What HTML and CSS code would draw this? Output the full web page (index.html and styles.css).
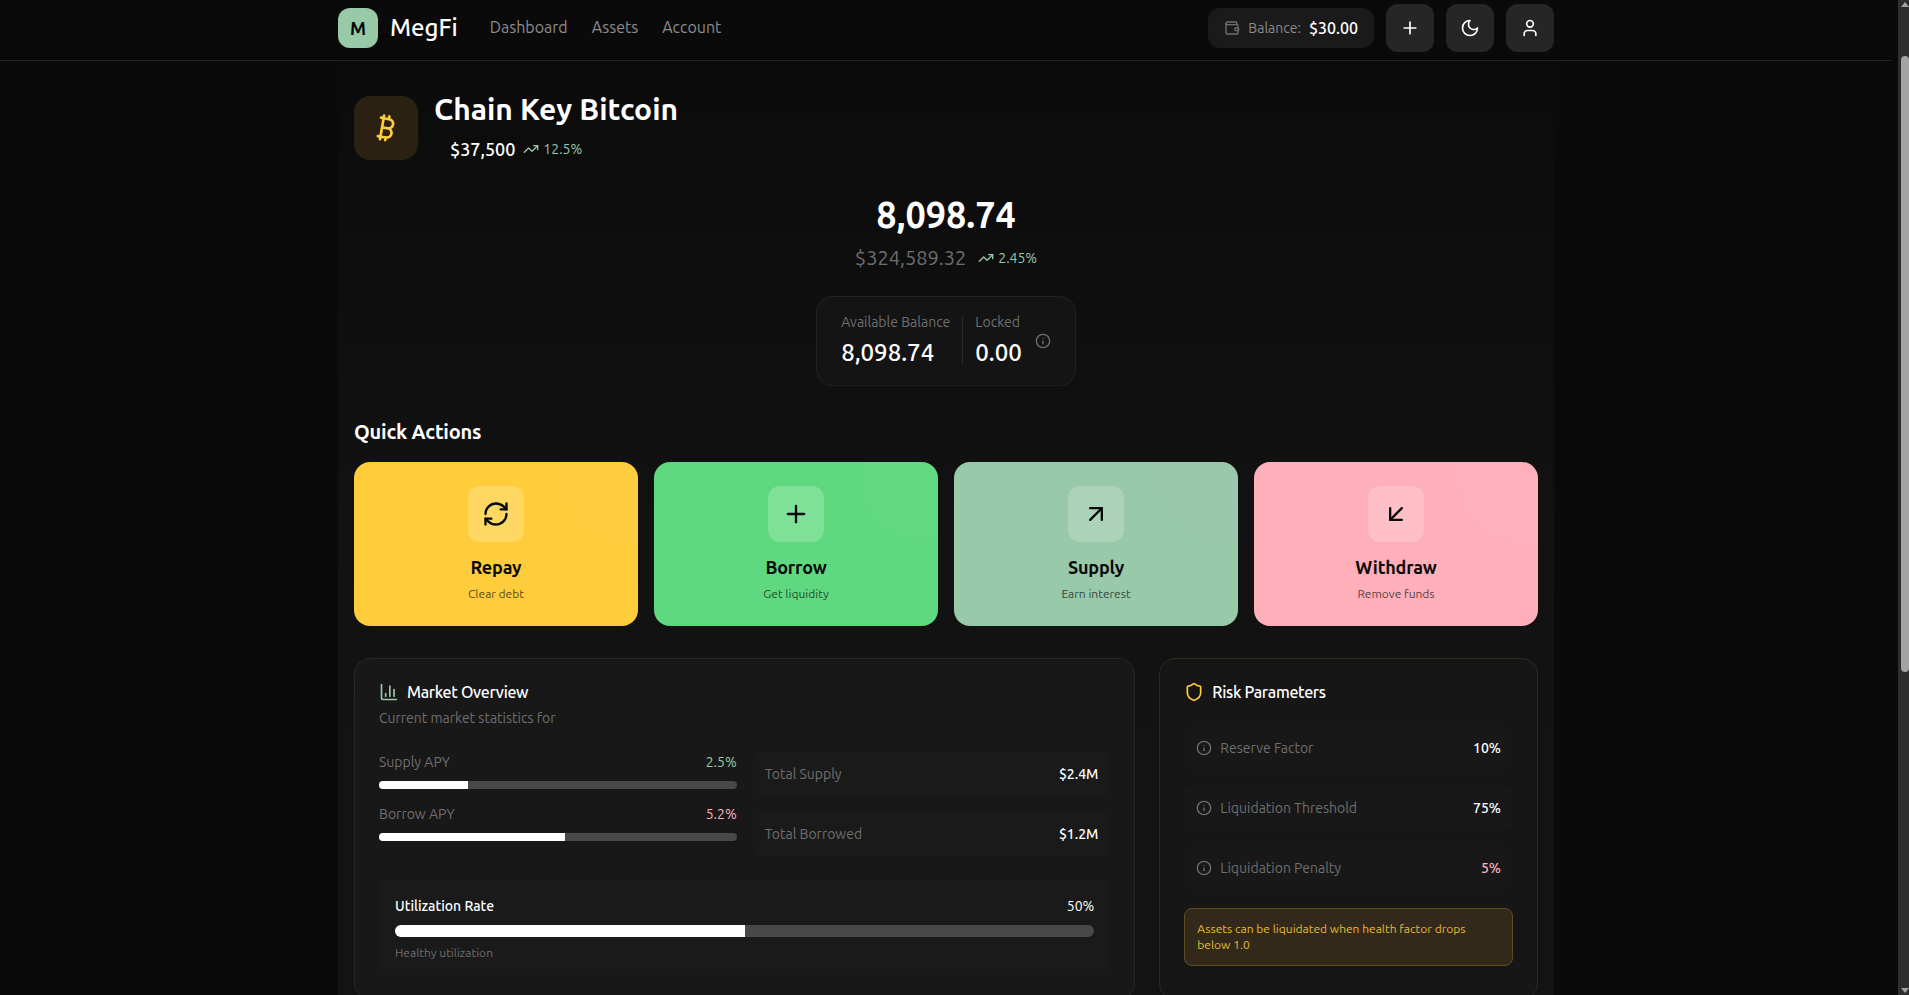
FILE: index.html
```html
<!DOCTYPE html>
<html lang="en">
<head>
<meta charset="utf-8">
<title>MegFi</title>
<link rel="stylesheet" href="styles.css">
</head>
<body>
<header class="topbar">
  <div class="topbar-inner">
    <div class="brand">
      <span class="brand-mark">M</span>
      <span class="brand-name">MegFi</span>
    </div>
    <nav class="nav">
      <a class="nav-link">Dashboard</a>
      <a class="nav-link">Assets</a>
      <a class="nav-link">Account</a>
    </nav>
    <div class="tools">
      <div class="balance">
        <svg class="balance-icon" viewBox="0 0 24 24" fill="none" stroke="currentColor" stroke-width="2" stroke-linecap="round" stroke-linejoin="round"><path d="M19 7V4a1 1 0 0 0-1-1H5a2 2 0 0 0 0 4h15a1 1 0 0 1 1 1v4h-3a2 2 0 0 0 0 4h3a1 1 0 0 0 1-1v-2a1 1 0 0 0-1-1"/><path d="M3 5v14a2 2 0 0 0 2 2h15a1 1 0 0 0 1-1v-4"/></svg>
        <span class="balance-label">Balance:</span>
        <span class="balance-value">$30.00</span>
      </div>
      <button class="tool-btn"><svg viewBox="0 0 24 24" class="ic20" fill="none" stroke="currentColor" stroke-width="2" stroke-linecap="round" stroke-linejoin="round"><path d="M5 12h14"/><path d="M12 5v14"/></svg></button>
      <button class="tool-btn"><svg viewBox="0 0 24 24" class="ic20" fill="none" stroke="currentColor" stroke-width="2" stroke-linecap="round" stroke-linejoin="round"><path d="M12 3a6 6 0 0 0 9 9 9 9 0 1 1-9-9Z"/></svg></button>
      <button class="tool-btn"><svg viewBox="0 0 24 24" class="ic20" fill="none" stroke="currentColor" stroke-width="2" stroke-linecap="round" stroke-linejoin="round"><path d="M19 21v-2a4 4 0 0 0-4-4H9a4 4 0 0 0-4 4v2"/><circle cx="12" cy="7" r="4"/></svg></button>
    </div>
  </div>
</header>
<main class="page">
  <section class="asset-head">
    <div class="asset-logo">
      <svg viewBox="0 0 24 24" class="ic32" fill="none" stroke="#ffcd3c" stroke-width="2" stroke-linecap="round" stroke-linejoin="round"><path d="M11.767 19.089c4.924.868 6.14-6.025 1.216-6.894m-1.216 6.894L5.86 18.047m5.908 1.042-.347 1.97m1.563-8.864c4.924.869 6.14-6.025 1.215-6.893m-1.215 6.893-3.94-.694m5.155-6.2L8.29 4.26m5.908 1.042.348-1.97M7.48 20.364l3.126-17.727"/></svg>
    </div>
    <div class="asset-text">
      <h1 class="asset-name">Chain Key Bitcoin</h1>
      <div class="asset-price">
        <span class="price">$37,500</span>
        <span class="trend"><svg viewBox="0 0 24 24" class="ic16" fill="none" stroke="currentColor" stroke-width="2" stroke-linecap="round" stroke-linejoin="round"><path d="M22 7 13.5 15.5 8.5 10.5 2 17"/><path d="M16 7h6v6"/></svg>12.5%</span>
      </div>
    </div>
  </section>

  <section class="holdings">
    <div class="holdings-amount">8,098.74</div>
    <div class="holdings-value">
      <span class="usd">$324,589.32</span>
      <span class="trend"><svg viewBox="0 0 24 24" class="ic16" fill="none" stroke="currentColor" stroke-width="2" stroke-linecap="round" stroke-linejoin="round"><path d="M22 7 13.5 15.5 8.5 10.5 2 17"/><path d="M16 7h6v6"/></svg>2.45%</span>
    </div>
    <div class="balance-card">
      <div class="bc-col">
        <div class="bc-label">Available Balance</div>
        <div class="bc-value">8,098.74</div>
      </div>
      <div class="bc-divider"></div>
      <div class="bc-col">
        <div class="bc-label">Locked</div>
        <div class="bc-value">0.00</div>
      </div>
      <svg viewBox="0 0 24 24" class="ic16 bc-info" fill="none" stroke="currentColor" stroke-width="2" stroke-linecap="round" stroke-linejoin="round"><circle cx="12" cy="12" r="10"/><path d="M12 16v-4"/><path d="M12 8h.01"/></svg>
    </div>
  </section>

  <section class="actions">
    <h2 class="section-title">Quick Actions</h2>
    <div class="action-grid">
      <div class="action action-repay">
        <span class="action-icon"><svg viewBox="0 0 24 24" class="ic28" fill="none" stroke="currentColor" stroke-width="2" stroke-linecap="round" stroke-linejoin="round"><path d="M3 12a9 9 0 0 1 9-9 9.75 9.75 0 0 1 6.74 2.74L21 8"/><path d="M21 3v5h-5"/><path d="M21 12a9 9 0 0 1-9 9 9.75 9.75 0 0 1-6.74-2.74L3 16"/><path d="M8 16H3v5"/></svg></span>
        <span class="action-name">Repay</span>
        <span class="action-sub">Clear debt</span>
      </div>
      <div class="action action-borrow">
        <span class="action-icon"><svg viewBox="0 0 24 24" class="ic28" fill="none" stroke="currentColor" stroke-width="2" stroke-linecap="round" stroke-linejoin="round"><path d="M5 12h14"/><path d="M12 5v14"/></svg></span>
        <span class="action-name">Borrow</span>
        <span class="action-sub">Get liquidity</span>
      </div>
      <div class="action action-supply">
        <span class="action-icon"><svg viewBox="0 0 24 24" class="ic28" fill="none" stroke="currentColor" stroke-width="2" stroke-linecap="round" stroke-linejoin="round"><path d="M7 7h10v10"/><path d="M7 17 17 7"/></svg></span>
        <span class="action-name">Supply</span>
        <span class="action-sub">Earn interest</span>
      </div>
      <div class="action action-withdraw">
        <span class="action-icon"><svg viewBox="0 0 24 24" class="ic28" fill="none" stroke="currentColor" stroke-width="2" stroke-linecap="round" stroke-linejoin="round"><path d="M17 7 7 17"/><path d="M17 17H7V7"/></svg></span>
        <span class="action-name">Withdraw</span>
        <span class="action-sub">Remove funds</span>
      </div>
    </div>
  </section>

  <section class="panels">
    <div class="panel panel-market">
      <h3 class="panel-title"><svg viewBox="0 0 24 24" class="ic20 green" fill="none" stroke="currentColor" stroke-width="2" stroke-linecap="round" stroke-linejoin="round"><path d="M3 3v16a2 2 0 0 0 2 2h16"/><path d="M8 17v-3"/><path d="M13 17V5"/><path d="M18 17V9"/></svg>Market Overview</h3>
      <p class="panel-sub">Current market statistics for</p>
      <div class="market-grid">
        <div class="apy-list">
          <div class="apy">
            <div class="apy-row"><span class="muted">Supply APY</span><span class="green">2.5%</span></div>
            <div class="track"><div class="fill" style="width:25%"></div></div>
          </div>
          <div class="apy">
            <div class="apy-row"><span class="muted">Borrow APY</span><span class="pink">5.2%</span></div>
            <div class="track"><div class="fill" style="width:52%"></div></div>
          </div>
        </div>
        <div class="total-list">
          <div class="stat"><span class="muted">Total Supply</span><span class="stat-val">$2.4M</span></div>
          <div class="stat"><span class="muted">Total Borrowed</span><span class="stat-val">$1.2M</span></div>
        </div>
      </div>
      <div class="util">
        <div class="util-row"><span class="util-name">Utilization Rate</span><span>50%</span></div>
        <div class="track track-lg"><div class="fill" style="width:50%"></div></div>
        <div class="util-note">Healthy utilization</div>
      </div>
    </div>
    <div class="panel panel-risk">
      <h3 class="panel-title"><svg viewBox="0 0 24 24" class="ic20 yellow" fill="none" stroke="currentColor" stroke-width="2" stroke-linecap="round" stroke-linejoin="round"><path d="M20 13c0 5-3.5 7.5-7.66 8.95a1 1 0 0 1-.67-.01C7.5 20.5 4 18 4 13V6a1 1 0 0 1 1-1c2 0 4.5-1.2 6.24-2.72a1.17 1.17 0 0 1 1.52 0C14.51 3.81 17 5 19 5a1 1 0 0 1 1 1z"/></svg>Risk Parameters</h3>
      <div class="risk-list">
        <div class="stat risk"><span class="risk-key"><svg viewBox="0 0 24 24" class="ic16" fill="none" stroke="currentColor" stroke-width="2" stroke-linecap="round" stroke-linejoin="round"><circle cx="12" cy="12" r="10"/><path d="M12 16v-4"/><path d="M12 8h.01"/></svg>Reserve Factor</span><span class="stat-val">10%</span></div>
        <div class="stat risk"><span class="risk-key"><svg viewBox="0 0 24 24" class="ic16" fill="none" stroke="currentColor" stroke-width="2" stroke-linecap="round" stroke-linejoin="round"><circle cx="12" cy="12" r="10"/><path d="M12 16v-4"/><path d="M12 8h.01"/></svg>Liquidation Threshold</span><span class="stat-val">75%</span></div>
        <div class="stat risk"><span class="risk-key"><svg viewBox="0 0 24 24" class="ic16" fill="none" stroke="currentColor" stroke-width="2" stroke-linecap="round" stroke-linejoin="round"><circle cx="12" cy="12" r="10"/><path d="M12 16v-4"/><path d="M12 8h.01"/></svg>Liquidation Penalty</span><span class="stat-val pink">5%</span></div>
      </div>
      <div class="warning">Assets can be liquidated when health factor drops below 1.0</div>
    </div>
  </section>
</main>
<div class="scrollbar" aria-hidden="true">
  <span class="scroll-up"></span>
  <span class="scroll-thumb"></span>
  <span class="scroll-down"></span>
</div>
</body>
</html>
```

FILE: styles.css
```css
* { box-sizing: border-box; }
html, body { margin: 0; background: #0a0a0a; }
body {
  font-family: Ubuntu, "Noto Sans", "Open Sans", sans-serif;
  color: #fff;
  padding-right: 17px;
}
h1, h2, h3, p { margin: 0; }
svg { display: block; flex: none; }
.ic16 { width: 16px; height: 16px; }
.ic20 { width: 20px; height: 20px; }
.ic28 { width: 28px; height: 28px; }
.ic32 { width: 32px; height: 32px; }
.green { color: #98c9a9; }
.pink { color: #ffafba; }
.yellow { color: #ffcd3c; }
.muted { color: #6f6f6f; }

.topbar { height: 61px; border-bottom: 1px solid #222; background: #0a0a0a; }
.topbar-inner { width: 1216px; margin: 0 auto; height: 56px; display: flex; align-items: center; }
.brand { display: flex; align-items: center; gap: 12px; }
.brand-mark { width: 40px; height: 40px; border-radius: 12px; background: #98c9a9; color: #0a0a0a; display: flex; align-items: center; justify-content: center; font-weight: 700; font-size: 18px; }
.brand-name { font-size: 24px; font-weight: 500; padding-bottom: 2px; }
.nav { display: flex; gap: 24px; margin-left: 32px; padding-bottom: 2px; }
.nav-link { font-size: 16px; color: #8c8c8c; }
.tools { margin-left: auto; display: flex; align-items: center; gap: 12px; }
.balance { height: 40px; padding: 0 16px; border-radius: 12px; background: #1a1a1a; display: flex; align-items: center; gap: 8px; font-size: 14px; }
.balance-icon { width: 16px; height: 16px; color: #6f6f6f; }
.balance-label { color: #8c8c8c; }
.balance-value { font-weight: 500; font-size: 16px; }
.tool-btn { width: 48px; height: 48px; border: 0; border-radius: 12px; background: #262626; color: #fff; display: flex; align-items: center; justify-content: center; padding: 0; }

.page { width: 1216px; min-height: 1450px; margin: 0 auto; padding: 35px 16px 32px; background: linear-gradient(180deg, #0b0b0b 0, #111 400px, #131313 700px); }
.asset-head { display: flex; gap: 16px; }
.asset-logo { width: 64px; height: 64px; border-radius: 16px; background: #2a2112; display: flex; align-items: center; justify-content: center; }
.asset-name { font-size: 30px; font-weight: 700; line-height: 26px; }
.asset-price { display: flex; align-items: center; gap: 8px; margin: 17px 0 0 16px; }
.price { font-size: 18px; font-weight: 500; }
.trend { display: inline-flex; align-items: center; gap: 4px; color: #98c9a9; font-size: 14px; }

.holdings { display: flex; flex-direction: column; align-items: center; margin-top: 35px; }
.holdings-amount { font-size: 36px; font-weight: 700; line-height: 40px; }
.holdings-value { display: flex; align-items: center; gap: 12px; margin-top: 9px; }
.usd { font-size: 20px; line-height: 28px; color: #6f6f6f; }
.balance-card { margin-top: 24px; height: 90px; border: 1px solid #222; border-radius: 16px; background: #141414; display: flex; align-items: center; gap: 12px; padding: 0 24px; white-space: nowrap; }
.bc-col { padding-bottom: 2px; }
.bc-label { font-size: 14px; line-height: 20px; color: #6f6f6f; }
.bc-value { font-size: 24px; line-height: 32px; font-weight: 500; margin-top: 5px; }
.bc-divider { width: 1px; height: 48px; background: #2a2a2a; }
.bc-info { color: #6f6f6f; margin-left: 1px; }

.actions { margin-top: 32px; }
.section-title { font-size: 20px; font-weight: 700; letter-spacing: -.01em; line-height: 28px; }
.action-grid { display: grid; grid-template-columns: repeat(4, 1fr); gap: 16px; margin-top: 16px; }
.action { position: relative; overflow: hidden; height: 164px; border-radius: 16px; color: #0a0a0a; display: flex; flex-direction: column; align-items: center; padding-top: 24px; }
.action::before { content: ""; position: absolute; top: -48px; right: -48px; width: 128px; height: 128px; border-radius: 50%; background: rgba(255,255,255,.015); }
.action-repay { background: #ffcd3c; }
.action-borrow { background: #5fd97f; }
.action-supply { background: #98c9a9; }
.action-withdraw { background: #ffafba; }
.action-icon { width: 56px; height: 56px; border-radius: 12px; background: rgba(255,255,255,.2); display: flex; align-items: center; justify-content: center; }
.action-name { font-size: 18px; font-weight: 700; letter-spacing: -.01em; line-height: 26px; margin-top: 12px; }
.action-sub { font-size: 12px; line-height: 16px; opacity: .7; margin-top: 6px; }

.panels { display: grid; grid-template-columns: repeat(3, 1fr); gap: 24px; margin-top: 32px; }
.panel { border: 1px solid #262626; border-radius: 16px; background: #181818; padding: 23px 24px 24px; }
.panel-market { grid-column: span 2; }
.panel-risk { background: #161616; border-color: #2e2a1c; }
.panel-title { display: flex; align-items: center; gap: 8px; font-size: 16px; font-weight: 500; letter-spacing: -.02em; line-height: 16px; }
.panel-sub { font-size: 14px; line-height: 20px; color: #6f6f6f; margin-top: 6px; }
.market-grid { display: grid; grid-template-columns: 1fr 1fr; gap: 16px; margin-top: 24px; }
.apy-list { display: flex; flex-direction: column; gap: 15px; }
.apy-row { display: flex; justify-content: space-between; font-size: 14px; line-height: 20px; margin-bottom: 9px; }
.track { height: 8px; border-radius: 999px; background: #484848; overflow: hidden; }
.track-lg { height: 12px; }
.fill { height: 100%; background: #fff; }
.total-list { display: flex; flex-direction: column; gap: 16px; }
.stat { display: flex; align-items: center; justify-content: space-between; padding: 12px; border-radius: 8px; background: #1a1a1a; font-size: 14px; line-height: 20px; }
.stat-val { font-weight: 500; }
.stat-val.pink { color: #ffafba; }
.util { margin-top: 24px; padding: 16px 16px 14px; border-radius: 8px; background: #1a1a1a; }
.util-row { display: flex; justify-content: space-between; font-size: 14px; line-height: 20px; margin-bottom: 9px; }
.util-name { font-weight: 500; }
.util-note { font-size: 12px; line-height: 16px; color: #6f6f6f; margin-top: 8px; }
.risk-list { display: flex; flex-direction: column; gap: 16px; margin-top: 24px; }
.risk { background: #181818; }
.risk-key { display: flex; align-items: center; gap: 8px; color: #6f6f6f; }
.warning { margin-top: 18px; padding: 12px; border: 1px solid #5d4d1f; border-radius: 8px; background: #33291b; color: #e6bb33; font-size: 12px; line-height: 16px; }

.scrollbar { position: fixed; top: 0; right: 0; bottom: 0; width: 11px; background: #2e2e2e; }
.scroll-thumb { position: absolute; top: 56px; left: 3px; width: 8px; height: 616px; border-radius: 4px; background: #a3a3a3; }
.scroll-up, .scroll-down { position: absolute; left: 3px; width: 0; height: 0; border-left: 4px solid transparent; border-right: 4px solid transparent; }
.scroll-up { top: 2px; border-bottom: 5px solid #a3a3a3; }
.scroll-down { bottom: 2px; border-top: 5px solid #a3a3a3; }
```
